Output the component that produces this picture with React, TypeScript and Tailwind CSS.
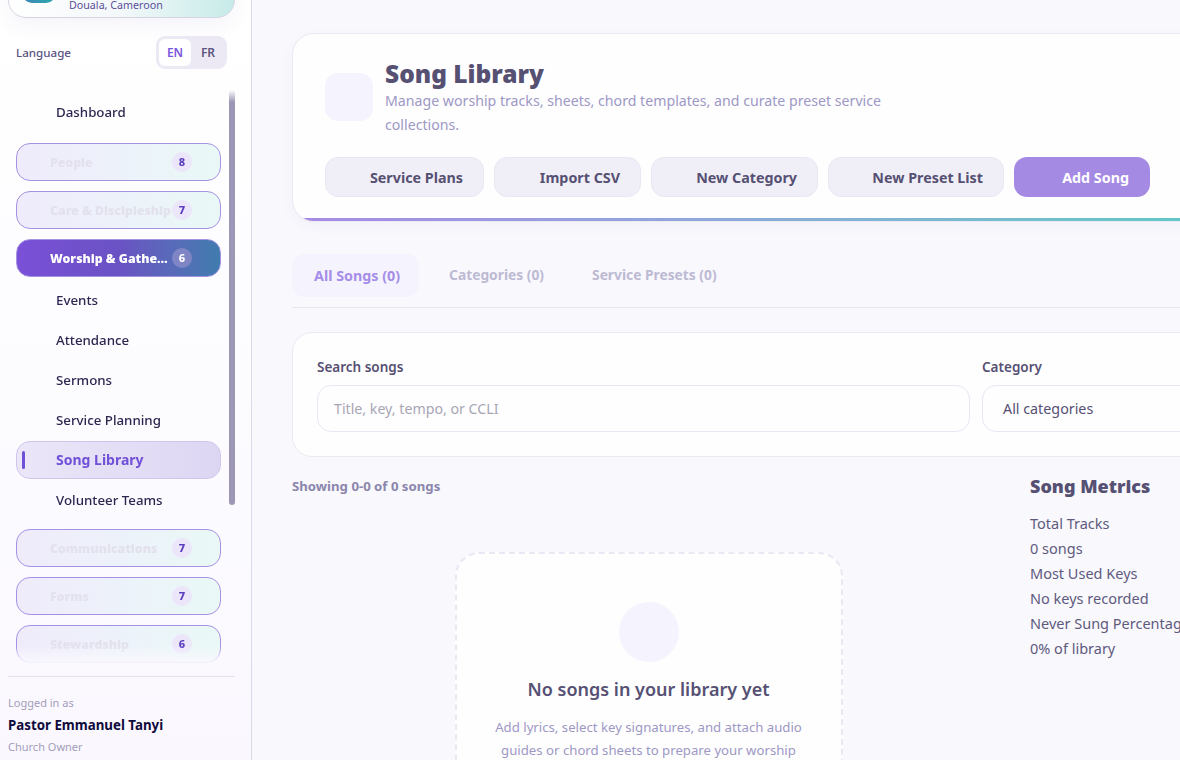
import React from "react";

const font = { fontFamily: '"Noto Sans", sans-serif' };

function Group({ label, count, active }: { label: string; count: number; active?: boolean }) {
  return (
    <div
      className={
        active
          ? "flex h-[38px] items-center rounded-[14px] border border-[#a592e2] bg-gradient-to-r from-[#7a50d8] via-[#6a52c4] to-[#3f7cae] pl-[33px] pr-[28px] pt-[2px]"
          : "flex h-[38px] items-center rounded-[14px] border border-[#a592e2] bg-gradient-to-r from-[#efebfb] via-[#edf2fa] to-[#e9f8f6] pl-[33px] pr-[28px] pt-[2px]"
      }
    >
      <span
        className={
          active
            ? "min-w-0 flex-1 truncate text-[12.3px] font-black text-white"
            : "min-w-0 flex-1 truncate text-[12.3px] font-black text-[#e3e1ed]"
        }
      >
        {label}
      </span>
      <span
        className={
          active
            ? "-mt-[2px] flex h-5 w-5 shrink-0 items-center justify-center rounded-full bg-[#7f84c4] text-[11px] font-extrabold text-white"
            : "-mt-[2px] flex h-5 w-5 shrink-0 items-center justify-center rounded-full bg-[#ece6fa] text-[11px] font-extrabold text-[#5b3fbf]"
        }
      >
        {count}
      </span>
    </div>
  );
}

function Child({ label }: { label: string }) {
  return (
    <div className="my-px flex h-[38px] items-center pl-[40px] pt-[2px] text-[13.3px] font-medium text-[#2c2750]">{label}</div>
  );
}

function HeaderButton({ label, width, primary }: { label: string; width: string; primary?: boolean }) {
  return (
    <div
      className={
        (primary
          ? "flex h-10 items-center justify-end rounded-[13px] bg-[#a58ae4] pr-[21px] pt-[2px] text-[14.3px] font-bold text-white "
          : "flex h-10 items-center justify-end rounded-[13px] border border-[#e8e7f2] bg-[#f0eff7] pr-[20px] pt-[2px] text-[14.3px] font-bold text-[#565073] ") + width
      }
    >
      {label}
    </div>
  );
}

export default function App() {
  return (
    <div style={font} className="flex h-[760px] w-[1180px] overflow-hidden bg-[#f8f8fd]">
      <aside className="flex h-[760px] w-[252px] shrink-0 flex-col border-r border-[#dcdae8] bg-gradient-to-b from-white to-[#faf8fe]">
        <div className="mx-2 -mt-[42px] flex h-[60px] w-[227px] shrink-0 items-end rounded-[18px] border border-[#d5d3e4] bg-gradient-to-r from-white via-[#f3f8fa] to-[#c6ebe8] pb-[4px] pl-[13px] shadow-[0_8px_20px_rgba(90,70,160,0.06)]">
          <div className="-mb-px mr-[13px] h-[44px] w-[34px] self-start rounded-[10px] bg-gradient-to-r from-[#3f86b8] to-[#2aa9a9]" />
          <span className="text-[10.7px] leading-[15px] text-[#5b4f9a]">Douala, Cameroon</span>
        </div>
        <div className="mt-[18px] flex h-[33px] shrink-0 items-center justify-between pl-4 pr-[24px]">
          <span className="text-[11.6px] font-medium text-[#5b5480]">Language</span>
          <div className="flex h-[33px] w-[71px] items-center rounded-[9px] bg-[#ece9f5] pl-[3px]">
            <span className="flex h-[27px] w-[32px] items-center justify-center rounded-[6px] bg-white text-xs font-semibold text-[#7a55dd]">
              EN
            </span>
            <span className="flex h-[27px] w-[34px] items-center justify-center text-xs font-semibold text-[#5b5480]">
              FR
            </span>
          </div>
        </div>
        <nav className="relative mt-[21px] h-[574px] shrink-0 overflow-hidden pl-4 [mask-image:linear-gradient(to_bottom,transparent,black_12px,black_calc(100%-18px),transparent)]">
          <div className="flex w-[205px] flex-col pt-[3px]">
            <div className="flex h-[38px] items-center pl-[40px] pt-[2px] text-[13.3px] font-medium text-[#2c2750]">Dashboard</div>
            <div className="mt-3 flex flex-col gap-[10px]">
              <Group label="People" count={8} />
              <Group label="Care & Discipleship" count={7} />
              <Group label="Worship & Gatherings" count={6} active />
            </div>
            <div className="mt-[3px] flex flex-col">
              <Child label="Events" />
              <Child label="Attendance" />
              <Child label="Sermons" />
              <Child label="Service Planning" />
              <div className="relative my-px flex h-[38px] items-center rounded-[14px] border border-[#cfc6ec] bg-gradient-to-r from-[#ebe6f8] to-[#ddd6f3] pl-[39px] text-sm font-bold text-[#7150d8]">
                <span className="absolute left-[5px] top-[9px] h-[18px] w-[3px] rounded-full bg-[#7150d8]" />
                Song Library
              </div>
              <Child label="Volunteer Teams" />
            </div>
            <div className="mt-[9px] flex flex-col gap-[10px]">
              <Group label="Communications" count={7} />
              <Group label="Forms" count={7} />
              <Group label="Stewardship" count={6} />
            </div>
          </div>
          <div className="absolute left-[229px] top-0 h-[415px] w-[6px] rounded-full bg-[#9d97b5]" />
        </nav>
        <div className="ml-2 mt-[12px] w-[227px] border-t border-[#e2e0ec] pt-[18px]">
          <div className="text-[11px] leading-[16px] text-[#a29dbb]">Logged in as</div>
          <div className="mt-[5px] text-[13.3px] font-bold leading-[18px] text-[#0f0a3c]">Pastor Emmanuel Tanyi</div>
          <div className="mt-[5px] text-[11px] leading-[16px] text-[#a29dbb]">Church Owner</div>
        </div>
      </aside>

      <main className="min-w-0 flex-1 overflow-hidden pl-10 pt-[33px]">
        <div className="w-[960px]">
          <section className="relative h-[189px] overflow-hidden rounded-[22px] border border-[#ebeaf3] bg-[#fefeff] pl-8 pt-[25px] shadow-[0_4px_14px_rgba(90,70,160,0.04)]">
            <div className="flex">
              <div className="mt-[14px] h-12 w-12 shrink-0 rounded-[13px] bg-[#f5f4fe]" />
              <div className="ml-3 w-[520px]">
                <h1 className="text-[24.5px] font-black leading-[30px] text-[#565073]">Song Library</h1>
                <p className="text-[14.17px] leading-6 text-[#9d98c4]">
                  Manage worship tracks, sheets, chord templates, and curate preset service collections.
                </p>
              </div>
            </div>
            <div className="mt-5 flex gap-[10px]">
              <HeaderButton label="Service Plans" width="w-[159px]" />
              <HeaderButton label="Import CSV" width="w-[147px]" />
              <HeaderButton label="New Category" width="w-[167px]" />
              <HeaderButton label="New Preset List" width="w-[176px]" />
              <HeaderButton label="Add Song" width="w-[136px]" primary />
            </div>
            <div className="absolute inset-x-0 bottom-0 h-[3px] bg-gradient-to-r from-[#a78ae6] to-[#58cbc6]" />
          </section>

          <div className="mt-8 flex h-[54px] items-start gap-[10px] border-b border-[#e8e7f1]">
            <span className="flex h-[43px] items-center rounded-[13px] bg-[#f5f4fe] pl-[22px] pr-[19px] text-[14.3px] font-bold text-[#a68de8]">
              All Songs (0)
            </span>
            <span className="flex h-[43px] items-center rounded-[13px] px-5 text-[13.8px] font-bold text-[#bdbad3]">
              Categories (0)
            </span>
            <span className="flex h-[43px] items-center rounded-[13px] px-[18px] text-[13.8px] font-bold text-[#bdbad3]">
              Service Presets (0)
            </span>
          </div>

          <section className="mt-6 flex h-[125px] gap-3 rounded-[20px] border border-[#ebeaf3] bg-[#fefeff] px-6 pt-[23px]">
            <div className="w-[653px]">
              <div className="pt-px text-[13.5px] font-semibold leading-[20px] text-[#565073]">Search songs</div>
              <div className="mt-2 flex h-[47px] items-center rounded-[14px] border border-[#e8e7f3] px-4 text-[14.2px] text-[#a8a6b4]">
                Title, key, tempo, or CCLI
              </div>
            </div>
            <div className="flex-1">
              <div className="pt-px text-[13.5px] font-semibold leading-[20px] text-[#565073]">Category</div>
              <div className="mt-2 flex h-[47px] items-center rounded-[14px] border border-[#e8e7f3] pl-5 text-[14.3px] text-[#565073]">
                All categories
              </div>
            </div>
          </section>

          <div className="mt-[19px] flex">
            <div className="w-[713px] shrink-0">
              <div className="text-[13.2px] font-bold leading-[20px] text-[#8b86ab]">Showing 0-0 of 0 songs</div>
              <div className="mx-auto mt-[56px] flex h-[300px] w-[388px] flex-col items-center rounded-[24px] border-2 border-dashed border-[#e9e8f3] bg-[#fefeff] px-[30px] pt-[48px] text-center">
                <div className="h-[60px] w-[60px] rounded-full bg-[#f5f4fe]" />
                <h2 className="mt-[14px] text-lg font-semibold leading-[26px] text-[#565073]">
                  No songs in your library yet
                </h2>
                <p className="mt-[14px] text-[13.2px] leading-[23px] text-[#9d98c4]">
                  Add lyrics, select key signatures, and attach audio guides or chord sheets to prepare your worship
                  services.
                </p>
              </div>
            </div>
            <div className="ml-[25px] w-[222px] shrink-0">
              <h3 className="-mt-[2px] text-[18px] font-black leading-[24px] text-[#565073]">Song Metrics</h3>
              <div className="mt-[13px] whitespace-nowrap text-[14.5px] leading-[25px] text-[#5f5a7d]">
                <div>Total Tracks</div>
                <div>0 songs</div>
                <div>Most Used Keys</div>
                <div>No keys recorded</div>
                <div>Never Sung Percentage</div>
                <div>0% of library</div>
              </div>
            </div>
          </div>
        </div>
      </main>
    </div>
  );
}
